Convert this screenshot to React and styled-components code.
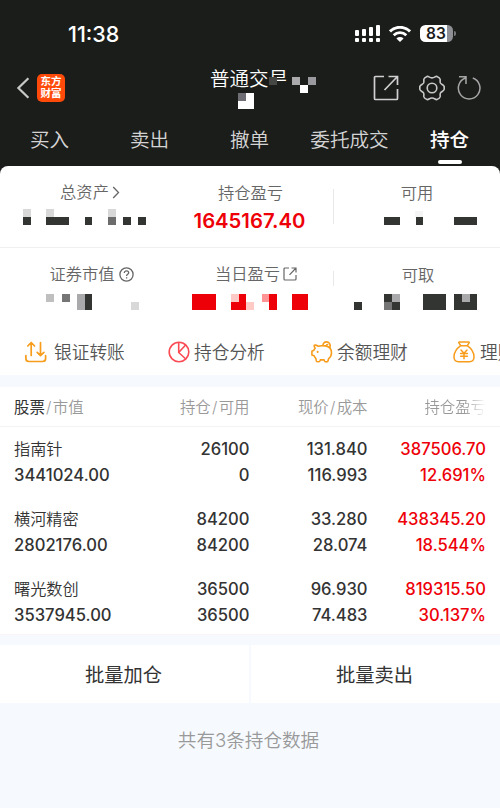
import styled, { createGlobalStyle } from 'styled-components';

const GlobalStyle = createGlobalStyle`
    * {
        box-sizing: border-box;
    }

    body {
        margin: 0;
        background: #f6faff;
        font-family: Inter, 'Noto Sans CJK SC', sans-serif;
        color: #333;
    }
`;

const Page = styled.div`
    width: 500px;
    height: 808px;
    overflow: hidden;
    background: #f6faff;
`;

const TopArea = styled.header`
    height: 166px;
    background: #1b1d1b;
    color: #fff;
`;

const StatusBar = styled.div`
    display: flex;
    align-items: center;
    justify-content: space-between;
    height: 67px;
    padding: 0 44px 0 68px;
`;

const Time = styled.span`
    padding-top: 1px;
    font-size: 21.5px;
    font-weight: 500;
    line-height: 24px;
`;

const StatusIcons = styled.div`
    display: flex;
    align-items: center;
    gap: 9px;
`;

const Battery = styled.div`
    display: flex;
    align-items: center;
    gap: 1px;
`;

const BatteryBody = styled.div`
    width: 33px;
    height: 17px;
    padding-right: 1px;
    border-radius: 5.5px;
    background: linear-gradient(90deg, #fff 27px, #8d8f94 27px);
    color: #1b1d1b;
    font-size: 15.5px;
    font-weight: 600;
    line-height: 17px;
    text-align: center;
`;

const BatteryCap = styled.div`
    width: 2px;
    height: 5px;
    border-radius: 0 2px 2px 0;
    background: #77797c;
`;

const NavBar = styled.div`
    display: grid;
    grid-template-columns: 1fr auto 1fr;
    align-items: center;
    height: 42px;
    padding: 0 19px 0 16px;
`;

const NavLeft = styled.div`
    display: flex;
    align-items: center;
    gap: 7px;
`;

const Logo = styled.div`
    display: flex;
    flex-direction: column;
    align-items: center;
    justify-content: center;
    width: 28px;
    height: 28px;
    border-radius: 5px;
    background: #ff4a0a;
    font-size: 10.5px;
    font-weight: 700;
    line-height: 12px;
`;

const Title = styled.div`
    position: relative;
    width: 77px;
    padding-bottom: 18px;
    font-size: 19.5px;
    font-weight: 350;
    line-height: 24px;
    white-space: nowrap;
`;

const TitleMask = styled.svg`
    position: absolute;
    top: 9px;
    left: 26px;
`;

const NavRight = styled.div`
    display: flex;
    align-items: center;
    justify-content: flex-end;
    gap: 12px;

    svg:first-child {
        margin-right: 8px;
    }
`;

const Tabs = styled.nav`
    display: grid;
    grid-template-columns: repeat(5, 1fr);
    height: 57px;
    padding-top: 18px;
`;

const Tab = styled.div`
    display: flex;
    flex-direction: column;
    align-items: center;
    gap: 7px;
    margin-left: -1px;
    color: ${({ $active }) => ($active ? '#fff' : '#d4d4d4')};
    font-size: 19.6px;
    font-weight: ${({ $active }) => ($active ? 500 : 350)};
    line-height: 26px;

    &::after {
        content: '';
        width: 24px;
        height: 4px;
        border-radius: 2px;
        background: ${({ $active }) => ($active ? '#fff' : 'transparent')};
    }
`;

const Panel = styled.section`
    height: 209px;
    background: linear-gradient(#1b1d1b 10px, #fff 10px);
`;

const PanelInner = styled.div`
    height: 100%;
    border-radius: 8px 8px 0 0;
    background: #fff;
    overflow: hidden;
`;

const StatRow = styled.div`
    display: grid;
    grid-template-columns: 167px 167px 166px;
    height: ${({ $height }) => $height}px;
    padding-top: ${({ $top }) => $top}px;
    border-bottom: ${({ $line }) => ($line ? '1px solid #efefef' : '0')};
`;

const Stat = styled.div`
    display: flex;
    flex-direction: column;
    align-items: center;
    background: linear-gradient(#e8e8e8, #e8e8e8) no-repeat right ${({ $ruleTop }) => $ruleTop || 0}px / 1px
        ${({ $rule }) => $rule || 0}px;
`;

const StatLabel = styled.div`
    display: flex;
    align-items: center;
    gap: ${({ $gap }) => $gap ?? 3}px;
    height: 26px;
    margin-top: ${({ $drop }) => $drop || 0}px;
    margin-bottom: ${({ $drop }) => -($drop || 0)}px;
    padding-left: ${({ $indent }) => $indent || 0}px;
    color: #666;
    font-size: 16.3px;
    font-weight: 350;
    line-height: 26px;
`;

const StatValue = styled.div`
    margin-top: 3px;
    padding-right: 2px;
    color: #ee0008;
    font-size: 20.3px;
    font-weight: 600;
    line-height: 26px;
`;

const MosaicSvg = styled.svg`
    display: block;
    margin-top: ${({ $top }) => $top}px;
`;

const Shortcuts = styled.div`
    display: flex;
    height: 46px;
    padding-left: 25px;
    overflow: hidden;
`;

const Shortcut = styled.div`
    display: flex;
    flex: 0 0 ${({ $width }) => $width}px;
    align-items: center;
    gap: ${({ $gap }) => $gap}px;
    color: #555;
    font-size: 17.7px;
    font-weight: 350;
    line-height: 26px;
    white-space: nowrap;

    svg {
        flex: none;
    }
`;

const ShortcutText = styled.span`
    padding-top: 1px;
`;

const Holdings = styled.section`
    height: 248px;
    margin-top: 12px;
    background: #fff;
    border-bottom: 1px solid #faf6f6;
`;

const HoldingRow = styled.div`
    display: grid;
    grid-template-columns: 125px 110.5px 118px 118.5px;
    padding: 0 14px;
    height: 70px;
    align-content: start;
`;

const HoldingHead = styled(HoldingRow)`
    height: 40px;
    margin-bottom: 9px;
    padding-top: 2px;
    align-content: center;
    border-bottom: 1px solid #f3f3f3;
    color: #999;
    font-size: 15.4px;
    font-weight: 350;
    line-height: 24px;
`;

const HeadCell = styled.div`
    text-align: ${({ $left }) => ($left ? 'left' : 'right')};
    white-space: nowrap;

    b {
        color: #333;
        font-weight: 400;
    }

    i {
        display: inline-block;
        width: 8px;
        font-style: normal;
        text-align: center;
    }
`;

const FadeText = styled.span`
    background: linear-gradient(90deg, #999 65%, #fff 100%);
    background-clip: text;
    color: transparent;
`;

const Cell = styled.div`
    color: ${({ $up }) => ($up ? '#ee0008' : '#333')};
    font-size: 16.6px;
    font-weight: 500;
    line-height: 26px;
    text-align: ${({ $left }) => ($left ? 'left' : 'right')};
    white-space: nowrap;
`;

const StockName = styled(Cell)`
    font-size: 16.2px;
    font-weight: 350;
`;

const Actions = styled.div`
    display: grid;
    grid-template-columns: 1fr 1fr;
    gap: 2px;
    margin-top: 10px;
`;

const ActionButton = styled.button`
    height: 58px;
    padding: 0 2px 0 0;
    border: 0;
    background: #fff;
    color: #333;
    font-family: inherit;
    font-size: 19.3px;
    font-weight: 400;
`;

const Summary = styled.p`
    margin: 23px 0 0;
    padding-right: 3px;
    color: #999;
    font-size: 18.6px;
    font-weight: 350;
    line-height: 28px;
    text-align: center;
`;

const DARK = '#333533';
const RED = '#ee0008';

// 打码方块: [x, y, 宽, 高, 颜色]
const totalMask = [
  [23, 0, 8, 8, '#d8d8d8'], [23, 8, 8, 7.5, DARK],
  [46, 0, 8, 8, '#d8d8d8'], [46, 8, 23, 7.5, DARK],
  [84.5, 8, 7.5, 7.5, DARK],
  [108, 0, 8, 8, '#d8d8d8'], [108, 8, 8, 7.5, '#6b6c6b'],
  [123, 8, 8, 7.5, DARK], [138, 8, 8, 7.5, DARK],
];

const availableMask = [
  [50, 8, 16, 7.5, DARK],
  [81, 2, 8, 6, '#f5f5f5'], [81.5, 8, 7.5, 7.5, DARK],
  [120, 8, 23, 7.5, DARK],
];

const marketMask = [
  [46, 0, 8, 8, '#bfbfbf'], [62, 0, 7.5, 8, '#747574'],
  [77, 0, 8, 16, '#aaa9ac'], [84.5, 0, 7.5, 16, DARK],
  [131, 8, 7.5, 8, '#d8d8d8'],
];

const todayMask = [
  [25, 0, 24, 16, RED],
  [64, 0, 8, 8, '#ffc9c5'], [71.5, 0, 7.5, 8, RED], [64, 8, 15, 8, RED],
  [79, 8, 8, 8, '#ffc9c5'],
  [95, 0, 8, 8, '#ff9497'], [102, 0, 8, 16, RED],
  [125, 0, 16, 16, RED],
];

const withdrawMask = [
  [20, 8, 8, 8, DARK],
  [50, 0, 8, 8, DARK], [58, 0, 8, 8, '#aaa9ac'], [50, 8, 8, 8, '#747574'], [58, 8, 8, 8, DARK],
  [89, 0, 23, 16, DARK],
  [120, 0, 23, 16, DARK], [128, 0, 7.5, 8, '#aaa9ac'],
];

const holdings = [
  { name: '指南针', value: '3441024.00', amount: '26100', usable: '0', price: '131.840', cost: '116.993', profit: '387506.70', rate: '12.691%' },
  { name: '横河精密', value: '2802176.00', amount: '84200', usable: '84200', price: '33.280', cost: '28.074', profit: '438345.20', rate: '18.544%' },
  { name: '曙光数创', value: '3537945.00', amount: '36500', usable: '36500', price: '96.930', cost: '74.483', profit: '819315.50', rate: '30.137%' },
];

const Mosaic = ({ cells, top, width = 167 }) => (
  <MosaicSvg $top={top} width={width} height="16" shapeRendering="crispEdges">
    {cells.map(([x, y, w, h, fill]) => (
      <rect key={`${x}-${y}`} x={x} y={y} width={w} height={h} fill={fill} />
    ))}
  </MosaicSvg>
);

const SignalIcon = () => (
  <svg width="25" height="17" fill="#fff">
    <rect x="0" y="5" width="4" height="6" rx="1" />
    <rect x="7" y="4" width="4" height="7" rx="1" />
    <rect x="14" y="2" width="4" height="9" rx="1" />
    <rect x="21" y="0" width="4" height="11" rx="1" />
    {[0, 7, 14, 21].map(x => <rect key={x} x={x} y="13" width="4" height="4" rx="1" />)}
  </svg>
);

const WifiIcon = () => (
  <svg width="22" height="16" viewBox="0 0 22 16" fill="none" stroke="#fff">
    <path d="M1 5.400a14.200 14.200 0 0 1 20 0" strokeWidth="2.900" />
    <path d="M4.700 9.200a9 9 0 0 1 12.600 0" strokeWidth="2.800" />
    <path d="M11 16 7.400 12.400a5.200 5.200 0 0 1 7.200 0Z" fill="#fff" stroke="none" />
  </svg>
);

const BackIcon = () => (
  <svg width="14" height="22" viewBox="0 0 14 22" fill="none" stroke="#c9c9c9" strokeWidth="2.200">
    <path d="M12.400 1.300 2.400 11l10 9.700" />
  </svg>
);

const OpenIcon = () => (
  <svg width="26" height="26" viewBox="0 0 26 26" fill="none" stroke="#d0d0d0" strokeWidth="1.700">
    <path d="M11 1.500H2.500a1 1 0 0 0-1 1v21a1 1 0 0 0 1 1h21a1 1 0 0 0 1-1V14M15.500 1.500h9v8.500M24 2 11.500 15" />
  </svg>
);

const GearIcon = () => (
  <svg width="26" height="26" viewBox="0 0 26 26" fill="none" stroke="#c8c8c8" strokeWidth="1.600" strokeLinejoin="round">
    <path d="M8.100 1.400C9.700 1 10.200 2.900 13 2.900s3.300-1.900 4.900-1.500c1.600.6 2.900 1.500 3.200 2.700.3 1.500-.3 2.400.3 3.900.6 1.300 3.500 2 3.700 3.500.2 1 .2 2 0 3-.2 1.500-3.100 2.200-3.700 3.500-.6 1.500 0 2.400-.3 3.900-.3 1.200-1.600 2.100-3.200 2.700-1.600.4-2.100-1.600-4.900-1.600s-3.300 2-4.900 1.600c-1.600-.6-2.900-1.500-3.200-2.700-.3-1.500.3-2.400-.3-3.900C4 16.700 1.100 16 .9 14.500a8 8 0 0 1 0-3C1.100 10 4 9.300 4.600 8c.6-1.500 0-2.400.3-3.900.3-1.200 1.600-2.100 3.200-2.700Z" />
    <circle cx="13" cy="13" r="4.800" />
  </svg>
);

const RefreshIcon = () => (
  <svg width="24" height="26" viewBox="0 0 24 26" fill="none" stroke="#a6a6a6" strokeWidth="1.500">
    <path d="M15.800 3a10.800 10.800 0 1 1-7.300 0M2 1.800h7v7.200" />
  </svg>
);

const ArrowRightIcon = () => (
  <svg width="8" height="13" viewBox="0 0 8 13" fill="none" stroke="#666" strokeWidth="1.300">
    <path d="m1.200 1 5.300 5.500L1.200 12" />
  </svg>
);

const HelpIcon = () => (
  <svg width="15" height="15" viewBox="0 0 15 15" fill="none" stroke="#666" strokeWidth="1.300">
    <circle cx="7.500" cy="7.500" r="6.600" />
    <path d="M5.300 6.100c0-1.500 1-2.300 2.200-2.300s2.200.8 2.200 2c0 1.500-2.100 1.500-2.100 3.100M7.600 10.200v1.400" />
  </svg>
);

const ShareIcon = () => (
  <svg width="14" height="14" viewBox="0 0 14 14" fill="none" stroke="#666" strokeWidth="1.200">
    <path d="M6 1H2a1 1 0 0 0-1 1v10a1 1 0 0 0 1 1h10a1 1 0 0 0 1-1V8M8.500 1H13v4.500M13 1 6.500 7.800" />
  </svg>
);

const TransferIcon = () => (
  <svg width="22" height="22" viewBox="0 0 22 22" fill="none" stroke="#f79c1b" strokeWidth="1.700" strokeLinecap="round" strokeLinejoin="round">
    <path d="M.9 14.500v3a3 3 0 0 0 3 3h13.700a3 3 0 0 0 3-3v-3M6.200 14.500V1.700M2.800 5l3.400-3.500L9.600 5M15.500 1.500v12.900M12.200 11.300l3.300 3.300 3.400-3.300" />
  </svg>
);

const PieIcon = () => (
  <svg width="22" height="22" viewBox="0 0 22 22" fill="none" stroke="#fa4b55" strokeWidth="1.600">
    <circle cx="11" cy="11" r="9.800" />
    <path d="M10.700 1.200V11.500L17.800 18M10.700 11.500 17.600 4" />
  </svg>
);

const PiggyIcon = () => (
  <svg width="22" height="22" viewBox="0 0 22 22" fill="none" stroke="#f79c1b" strokeWidth="1.600" strokeLinecap="round" strokeLinejoin="round">
    <path d="M3.200 4.200c1.400-.3 2.700.1 3.800 1 1.800-.6 4.300-.6 7.500-.3 3.700.6 6 3.600 6 7.100 0 2.700-1.300 4.500-3 5.800l-.5 2.300c-.3 1-3.200 1-3.500 0l-.4-1.200H9.300L8.900 20c-.4 1-3.100 1-3.500 0l-.6-2.700c-.9-.7-1.300-1.600-1.700-2.500L.9 13.900v-3.600l2-1c.3-.8.7-1.400 1.300-2C3.300 6.400 3 5.300 3.200 4.200ZM12 4.600c-.3-2 1.300-3.700 3.500-3.700s4.300 1.800 3.500 5.300M15.400 4.900c.1-1 .5-1.400 1.200-1.400" />
    <path d="M6.600 10.800v.3" strokeWidth="2" />
  </svg>
);

const MoneyBagIcon = () => (
  <svg width="22" height="22" viewBox="0 0 22 22" fill="none" stroke="#f79c1b" strokeWidth="1.500" strokeLinecap="round" strokeLinejoin="round">
    <path d="M7.700 4.700 5.900 1.900c-.3-.6 0-.9.5-.9h9.200c.5 0 .8.300.5.900l-1.800 2.800ZM7.700 4.700C3.800 7.500 1 11.500 1 16c0 3.200 1.600 4.700 4.500 4.700h11c2.900 0 4.500-1.500 4.500-4.700 0-4.500-2.800-8.500-6.700-11.300M8 9l3 3.300L14 9M11 12.300v5.500M7.600 12.500h6.800M7.600 15.200h6.800" />
  </svg>
);

const App = () => {
  return (
    <Page>
      <GlobalStyle />
      <TopArea>
        <StatusBar>
          <Time>11:38</Time>
          <StatusIcons>
            <SignalIcon />
            <WifiIcon />
            <Battery>
              <BatteryBody>83</BatteryBody>
              <BatteryCap />
            </Battery>
          </StatusIcons>
        </StatusBar>
        <NavBar>
          <NavLeft>
            <BackIcon />
            <Logo>
              <span>东方</span>
              <span>财富</span>
            </Logo>
          </NavLeft>
          <Title>
            普通交易
            <TitleMask width="84" height="36" shapeRendering="crispEdges">
              <rect x="33" y="8" width="24" height="8" fill="#1b1d1b" />
              <rect x="41" y="5" width="12" height="4" fill="#1b1d1b" />
              <rect x="33" y="1" width="8" height="8" fill="#454745" />
              <rect x="56" y="1" width="8" height="8" fill="#aaa9ac" />
              <rect x="64" y="9" width="8" height="8" fill="#fff" />
              <rect x="72" y="1" width="8" height="8" fill="#9a999d" />
              <rect x="2" y="17" width="8" height="8" fill="#6f6e74" />
              <rect x="10" y="17" width="8" height="8" fill="#fff" />
              <rect x="2" y="25" width="16" height="8" fill="#fff" />
            </TitleMask>
          </Title>
          <NavRight>
            <OpenIcon />
            <GearIcon />
            <RefreshIcon />
          </NavRight>
        </NavBar>
        <Tabs>
          <Tab>买入</Tab>
          <Tab>卖出</Tab>
          <Tab>撤单</Tab>
          <Tab>委托成交</Tab>
          <Tab $active>持仓</Tab>
        </Tabs>
      </TopArea>

      <Panel>
        <PanelInner>
          <StatRow $height={82} $top={13} $line>
            <Stat>
              <StatLabel $indent={13}>总资产<ArrowRightIcon /></StatLabel>
              <Mosaic cells={totalMask} top={4} />
            </Stat>
            <Stat $rule={35} $ruleTop={10}>
              <StatLabel $drop={1}>持仓盈亏</StatLabel>
              <StatValue>1645167.40</StatValue>
            </Stat>
            <Stat>
              <StatLabel $drop={1}>可用</StatLabel>
              <Mosaic cells={availableMask} top={4} width={166} />
            </Stat>
          </StatRow>
          <StatRow $height={81} $top={12}>
            <Stat>
              <StatLabel $drop={1} $indent={16} $gap={4}>证券市值<HelpIcon /></StatLabel>
              <Mosaic cells={marketMask} top={8} />
            </Stat>
            <Stat $rule={15} $ruleTop={11}>
              <StatLabel $drop={1} $indent={11}>当日盈亏<ShareIcon /></StatLabel>
              <Mosaic cells={todayMask} top={8} />
            </Stat>
            <Stat>
              <StatLabel $drop={2} $indent={2}>可取</StatLabel>
              <Mosaic cells={withdrawMask} top={8} width={166} />
            </Stat>
          </StatRow>
          <Shortcuts>
            <Shortcut $width={143} $gap={7}><TransferIcon /><ShortcutText>银证转账</ShortcutText></Shortcut>
            <Shortcut $width={143} $gap={4}><PieIcon /><ShortcutText>持仓分析</ShortcutText></Shortcut>
            <Shortcut $width={142} $gap={4}><PiggyIcon /><ShortcutText>余额理财</ShortcutText></Shortcut>
            <Shortcut $width={143} $gap={5}><MoneyBagIcon /><ShortcutText>理财</ShortcutText></Shortcut>
          </Shortcuts>
        </PanelInner>
      </Panel>

      <Holdings>
        <HoldingHead>
          <HeadCell $left><b>股票</b><i>/</i>市值</HeadCell>
          <HeadCell>持仓<i>/</i>可用</HeadCell>
          <HeadCell>现价<i>/</i>成本</HeadCell>
          <HeadCell><FadeText>持仓盈亏</FadeText></HeadCell>
        </HoldingHead>
        {holdings.map(item => (
          <HoldingRow key={item.name}>
            <StockName $left>{item.name}</StockName>
            <Cell>{item.amount}</Cell>
            <Cell>{item.price}</Cell>
            <Cell $up>{item.profit}</Cell>
            <Cell $left>{item.value}</Cell>
            <Cell>{item.usable}</Cell>
            <Cell>{item.cost}</Cell>
            <Cell $up>{item.rate}</Cell>
          </HoldingRow>
        ))}
      </Holdings>

      <Actions>
        <ActionButton>批量加仓</ActionButton>
        <ActionButton>批量卖出</ActionButton>
      </Actions>
      <Summary>共有3条持仓数据</Summary>
    </Page>
  );
};

export default App;
